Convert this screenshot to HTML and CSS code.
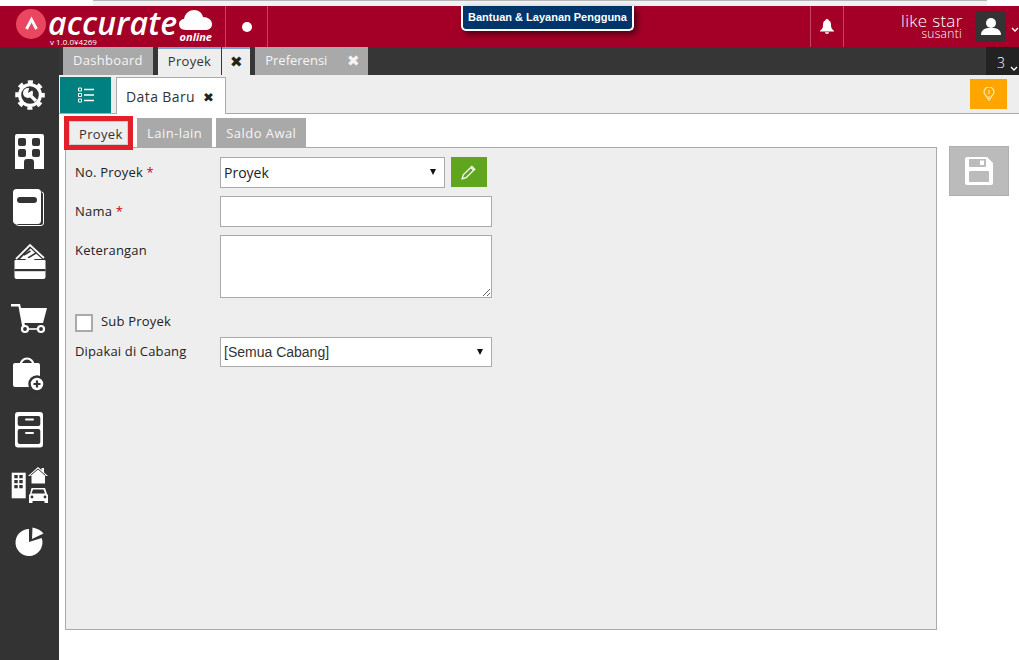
FILE: index.html
```html
<!DOCTYPE html>
<html lang="en">
  <head>
    <meta charset="UTF-8" />
    <title>Accurate Online - Proyek</title>
    <link rel="stylesheet" href="styles.css">
  </head>
  <body>
    <div class="top-strip"></div>
    <header class="header">
      <div class="logo">
        <svg class="logo-mark" viewBox="0 0 30 30" width="30" height="30">
          <circle cx="15" cy="15" r="15" fill="#e9475f" />
          <path d="M10.500 20 L15.500 10.500 L20.500 20" fill="none" stroke="#fff" stroke-width="2.800" />
        </svg>
        <span class="logo-word">accurate</span>
        <span class="logo-version">v 1.0.0¥4269</span>
        <div class="logo-cloud">
          <svg viewBox="0 0 33 22" width="33" height="22">
            <path d="M7 21 C2 21 0 18 0 15 C0 12 3 10 5 10 C6 4 11 1 15 1 C20 1 23 4 24 8 C29 8 33 11 33 15 C33 19 30 21 26 21 Z" fill="#fff" />
          </svg>
          <span>online</span>
        </div>
      </div>
      <div class="header-cell dot-cell"><span class="dot"></span></div>
      <div class="header-spacer"></div>
      <div class="header-cell bell-cell">
        <svg viewBox="0 0 14 15" width="14" height="15">
          <path d="M7 0 C8 0 8.500 .6 8.500 1.300 C10.500 2 11 4 11 6 C11 9 12 10.500 14 11.800 L14 12.500 L0 12.500 L0 11.800 C2 10.500 3 9 3 6 C3 4 3.500 2 5.500 1.300 C5.500 .6 6 0 7 0 Z M5 13.300 L9 13.300 C9 14.400 8 15 7 15 C6 15 5 14.400 5 13.300 Z" fill="#fff" />
        </svg>
      </div>
      <div class="user">
        <div class="user-name">like star</div>
        <div class="user-sub">susanti</div>
      </div>
      <div class="avatar">
        <svg viewBox="0 0 20 20" width="20" height="20">
          <circle cx="10" cy="6" r="5" fill="#fff" />
          <path d="M0 18 C0 13 4 11.500 7 11 L13 11 C16 11.500 20 13 20 18 Z" fill="#fff" />
        </svg>
      </div>
      <svg class="chevron" viewBox="0 0 8 5" width="8" height="5">
        <path d="M1 1 L4 4 L7 1" fill="none" stroke="#fff" stroke-width="1.300" />
      </svg>
      <div class="help-tip">Bantuan &amp; Layanan Pengguna</div>
    </header>

    <div class="main">
      <nav class="sidebar">
        <svg viewBox="0 0 40 40" width="40" height="40">
          <circle cx="20" cy="20" r="12" fill="#fff" />
          <circle cx="20" cy="20" r="12.800" fill="none" stroke="#fff" stroke-width="4" stroke-dasharray="5 5.050" stroke-dashoffset="2.500" />
          <circle cx="20" cy="20" r="8.800" fill="#333" />
          <path d="M19 19 L26 26" stroke="#fff" stroke-width="3.200" />
          <circle cx="18" cy="18" r="5" fill="#fff" />
          <path d="M18 18 L19.500 11.500 L24.500 14 Z" fill="#333" />
        </svg>
        <svg viewBox="0 0 40 40" width="40" height="40">
          <path d="M5 5 Q5 3 7 3 L32 3 Q34 3 34 5 L34 38 L24 38 L24 31 Q24 28 21 28 L17 28 Q14 28 14 31 L14 38 L5 38 Z" fill="#fff" />
          <rect x="8" y="7" width="8" height="8" rx="2" fill="#333" />
          <rect x="22" y="7" width="8" height="8" rx="2" fill="#333" />
          <rect x="8" y="18" width="8" height="8" rx="2" fill="#333" />
          <rect x="22" y="18" width="8" height="8" rx="2" fill="#333" />
        </svg>
        <svg viewBox="0 0 40 40" width="40" height="40">
          <path d="M31.500 5 Q33.500 5 33.500 7 L33.500 36 Q33.500 38.500 31 38.500 L9 38.500 Q6 38.500 5 36" fill="none" stroke="#fff" stroke-width="1" />
          <rect x="3" y="2" width="28" height="35" rx="3.500" fill="#fff" />
          <rect x="7" y="10" width="20" height="6" rx="3" fill="#333" />
        </svg>
        <svg viewBox="0 0 40 40" width="40" height="40">
          <path d="M6 17 L20 3 L34 16" fill="none" stroke="#fff" stroke-width="1.800" />
          <path d="M10 17 L20.500 6.500 L32 17 Z" fill="#fff" />
          <path d="M14 13 L20.500 9 M18 16 L26 11" stroke="#333" stroke-width="1.500" />
          <path d="M4.500 19 Q4.500 18 5.500 18 L15 18 Q20 13.500 25 18 L34.500 18 Q35.500 18 35.500 19 L35.500 35 Q35.500 37 33.500 37 L6.500 37 Q4.500 37 4.500 35 Z" fill="#fff" />
          <rect x="4.500" y="27" width="31" height="2.200" fill="#333" />
        </svg>
        <svg viewBox="0 0 40 40" width="40" height="40">
          <path d="M1 6 L10 6 L11 10 L37 10 L33 25 L14.500 25 L15.500 30 L12.500 30 L8.500 8.500 L1 8.500 Z" fill="#fff" />
          <path d="M15 31 L31 31" stroke="#fff" stroke-width="1.600" />
          <circle cx="15" cy="31" r="3" fill="#333" stroke="#fff" stroke-width="2.200" />
          <circle cx="31" cy="31" r="3" fill="#333" stroke="#fff" stroke-width="2.200" />
        </svg>
        <svg viewBox="0 0 40 40" width="40" height="40">
          <path d="M10.500 11 A6.500 6.500 0 0 1 23.500 11" fill="none" stroke="#fff" stroke-width="2.200" />
          <path d="M3 11 Q3 9 5 9 L28 9 Q30 9 30 11 L30 33 L5 33 Q3 33 3 31 Z" fill="#fff" />
          <circle cx="27" cy="30" r="7.500" fill="#fff" stroke="#333" stroke-width="2.500" />
          <path d="M23.500 30 L30.500 30 M27 26.500 L27 33.500" stroke="#333" stroke-width="2.200" />
        </svg>
        <svg viewBox="0 0 40 40" width="40" height="40">
          <rect x="5" y="2" width="28" height="35.500" rx="3" fill="#fff" />
          <rect x="7.700" y="6" width="22.600" height="10" rx="2" fill="#333" />
          <rect x="7.700" y="19" width="22.600" height="15" rx="2" fill="#333" />
          <rect x="15" y="8.500" width="9" height="2" rx="1" fill="#fff" />
          <rect x="15" y="22" width="9" height="2" rx="1" fill="#fff" />
        </svg>
        <svg viewBox="0 0 40 40" width="40" height="40">
          <rect x="1.700" y="6.700" width="14" height="25.600" fill="#fff" />
          <path d="M4.300 9 h3.400 v3.300 h-3.400 Z M9.300 9 h3.400 v3.300 h-3.400 Z M4.300 14 h3.400 v3.300 h-3.400 Z M9.300 14 h3.400 v3.300 h-3.400 Z M4.300 19 h3.400 v3.300 h-3.400 Z M9.300 19 h3.400 v3.300 h-3.400 Z" fill="#333" />
          <path d="M18 10 L28 1 L31.500 4 L31.500 2 L34 2 L34 6.500 L38 10 L35 10 L35 17.500 L21.500 17.500 L21.500 10 Z" fill="#fff" />
          <path d="M20.500 9.500 L28 3 L35.500 9.500" fill="none" stroke="#333" stroke-width="1" />
          <path d="M21.500 22 L35 22 L37 28 L38 29 L38 37 L34.500 37 L34.500 35 L22.500 35 L22.500 37 L19 37 L19 29 L20 28 Z" fill="#fff" />
          <path d="M23 23.500 L33.500 23.500 L35 27.500 L21.500 27.500 Z" fill="#333" />
          <circle cx="22" cy="31" r="1.400" fill="#333" />
          <circle cx="35" cy="31" r="1.400" fill="#333" />
        </svg>
        <svg viewBox="0 0 40 40" width="40" height="40">
          <path d="M19 8 L19 21 L31.700 17 A13.500 13.500 0 1 1 19 8 Z" fill="#fff" />
          <path d="M22 18 L22.500 6.500 Q30 8 33.500 12.500 Z" fill="#fff" />
        </svg>
      </nav>

      <div class="content">
        <div class="tabbar">
          <div class="tab">Dashboard</div>
          <div class="tab-group tab-group-active">
            <div class="tab tab-active">Proyek</div>
            <div class="tab tab-active tab-close">✖</div>
          </div>
          <div class="tab-group">
            <div class="tab tab-pref">Preferensi</div>
            <div class="tab tab-close">✖</div>
          </div>
          <div class="tab-count">3
            <svg viewBox="0 0 8 5" width="8" height="5">
              <path d="M1 1 L4 4 L7 1" fill="none" stroke="#fff" stroke-width="1.300" />
            </svg>
          </div>
        </div>

        <div class="toolbar">
          <div class="list-btn">
            <svg viewBox="0 0 18 18" width="18" height="18">
              <path d="M1.500 2 h3 v3 h-3 Z M1.500 7.500 h3 v3 h-3 Z M1.500 13 h3 v3 h-3 Z" fill="none" stroke="#fff" />
              <path d="M7 3.500 H17 M7 9 H17 M7 14.500 H17" stroke="#fff" stroke-width="1.500" />
            </svg>
          </div>
          <div class="doc-tab">Data Baru <span class="doc-close">✖</span></div>
          <div class="hint-btn">
            <svg viewBox="0 0 12 14" width="12" height="14">
              <path d="M3.500 10 C3.500 8 1 7.500 1 5 A5 5 0 0 1 11 5 C11 7.500 8.500 8 8.500 10 Z" fill="none" stroke="#ffe9a8" stroke-width="1.200" />
              <path d="M6 3 L6 7" stroke="#ffe9a8" stroke-width="1.200" />
              <path d="M4 11.500 H8 M4.500 13 H7.500" stroke="#ffe9a8" />
            </svg>
          </div>
        </div>

        <div class="body-row">
          <div class="form-col">
            <div class="subtabs">
              <div class="subtab subtab-active">Proyek</div>
              <div class="subtab">Lain-lain</div>
              <div class="subtab">Saldo Awal</div>
            </div>
            <form class="panel">
              <div class="row">
                <label class="label">No. Proyek <span class="req">*</span></label>
                <div class="select-wrap select-short">
                  <select class="field"><option>Proyek</option></select>
                </div>
                <button type="button" class="edit-btn">
                  <svg viewBox="0 0 14 14" width="16" height="16">
                    <path d="M1 13 L2 9.500 L9.500 2 L12 4.500 L4.500 12 Z M8.500 3 L11 5.500" fill="none" stroke="#fff" stroke-width="1.100" />
                  </svg>
                </button>
              </div>
              <div class="row">
                <label class="label">Nama <span class="req">*</span></label>
                <input class="field field-wide" type="text" />
              </div>
              <div class="row row-top">
                <label class="label">Keterangan</label>
                <textarea class="field field-wide field-area"></textarea>
              </div>
              <div class="check-row">
                <span class="check"></span>
                <label>Sub Proyek</label>
              </div>
              <div class="row">
                <label class="label label-branch">Dipakai di Cabang</label>
                <div class="select-wrap">
                  <select class="field field-wide field-arial"><option>[Semua Cabang]</option></select>
                </div>
              </div>
            </form>
          </div>
          <div class="save-btn">
            <svg viewBox="0 0 30 30" width="30" height="30">
              <path fill-rule="evenodd" d="M3 1 L23 1 L29 7 L29 27 Q29 29 27 29 L3 29 Q1 29 1 27 L1 3 Q1 1 3 1 Z M5 3 L5 10 Q5 11 6 11 L21 11 Q22 11 22 10 L22 3 Z M16 4.500 L20 4.500 L20 9 L16 9 Z M6 15 Q5 15 5 16 L5 26 L25 26 L25 16 Q25 15 24 15 Z" fill="#fff" />
            </svg>
          </div>
        </div>
      </div>
    </div>
  </body>
</html>
```

FILE: styles.css
```css
* {
  box-sizing: border-box;
}
html,
body {
  margin: 0;
  height: 660px;
  overflow: hidden;
}
body {
  font-family: "Open Sans", "Noto Sans", sans-serif;
  font-size: 13px;
  color: #222;
  background: white;
}
.top-strip {
  height: 6px;
  background: #f2f2f2;
  border-top: 1px solid #b5b5b5;
  margin-left: 93px;
  margin-right: 32px;
}

/* header */
.header {
  position: relative;
  height: 41px;
  display: flex;
  align-items: stretch;
  background: #a40027;
  color: white;
}
.logo {
  position: relative;
  width: 225px;
  flex: none;
}
.logo-mark {
  position: absolute;
  left: 16px;
  top: 3px;
}
.logo-word {
  position: absolute;
  left: 48px;
  top: 2px;
  font-family: "Open Sans", sans-serif;
  font-size: 32px;
  font-style: italic;
  font-weight: 600;
  letter-spacing: 0.2px;
  line-height: 30px;
  white-space: nowrap;
}
.logo-version {
  position: absolute;
  left: 50px;
  top: 32px;
  font-size: 8px;
  line-height: 8px;
  white-space: nowrap;
}
.logo-cloud {
  position: absolute;
  left: 179px;
  top: 3px;
  width: 33px;
  font-size: 11px;
  font-weight: 700;
  font-style: italic;
  line-height: 9px;
  text-align: right;
}
.logo-cloud svg {
  display: block;
  margin-bottom: 1px;
}
.header-cell {
  display: flex;
  align-items: center;
  justify-content: center;
  border-left: 1px solid #c2445f;
  flex: none;
}
.dot-cell {
  width: 43px;
  border-right: 1px solid #c2445f;
}
.dot {
  width: 10px;
  height: 10px;
  border-radius: 50%;
  background: white;
}
.header-spacer {
  flex: 1;
}
.bell-cell {
  width: 34px;
  border-right: 1px solid #c2445f;
  margin-right: 58px;
}
.user {
  width: 61px;
  margin-right: 13px;
  margin-left: -1px;
  text-align: right;
  white-space: nowrap;
  font-weight: 300;
}
.user-name {
  font-size: 17px;
  line-height: 14px;
  margin-top: 8px;
  letter-spacing: 0.3px;
}
.user-sub {
  font-size: 12px;
  line-height: 12px;
  letter-spacing: 0.3px;
}
.avatar {
  width: 31px;
  height: 31px;
  margin-top: 5px;
  margin-right: 5px;
  background: #333;
  border-radius: 2px;
  display: flex;
  align-items: center;
  justify-content: center;
  flex: none;
}
.chevron {
  margin-top: 21px;
  flex: none;
}
.help-tip {
  position: absolute;
  left: 461px;
  top: 0;
  width: 173px;
  height: 25px;
  background: #00356b;
  color: white;
  border: 2px solid white;
  border-top: none;
  border-radius: 0 0 5px 5px;
  box-shadow: 3px 3px 6px rgba(0, 0, 0, 0.55);
  font-family: "Liberation Sans", Arial, sans-serif;
  font-size: 11px;
  font-weight: 700;
  line-height: 22px;
  text-align: center;
  white-space: nowrap;
}

/* layout */
.main {
  height: 613px;
  display: flex;
}
.sidebar {
  width: 59px;
  flex: none;
  background: #333;
  padding-top: 28px;
  display: flex;
  flex-direction: column;
  align-items: center;
  gap: 15.800px;
}
.content {
  flex: 1;
  min-width: 0;
}

/* top tabs */
.tabbar {
  height: 28px;
  background: #363636;
  display: flex;
  padding-left: 4px;
  gap: 5px;
}
.tab {
  height: 28px;
  padding: 0 10px;
  background: #a9a9a9;
  color: #f5f5f5;
  line-height: 27px;
  letter-spacing: 0.3px;
}
.tab-group {
  display: flex;
}
.tab-group-active {
  gap: 1px;
}
.tab-active {
  background: #eeeeee;
  color: #333;
  border-top: 2px solid #7da2d0;
  line-height: 25px;
}
.tab-pref {
  width: 83px;
  padding-right: 0;
  white-space: nowrap;
  letter-spacing: 0;
}
.tab-close {
  width: 30px;
  padding: 0;
  text-align: center;
  font-size: 15px;
  letter-spacing: 0;
}
.tab-group-active .tab-close {
  width: 28px;
  color: #222;
}
.tab-count {
  margin-left: auto;
  width: 33px;
  background: #222;
  color: white;
  font-size: 14px;
  font-weight: 300;
  line-height: 31px;
  padding-left: 11px;
  position: relative;
  white-space: nowrap;
}
.tab-count svg {
  position: absolute;
  right: 1px;
  bottom: 4px;
}

/* toolbar */
.toolbar {
  height: 39px;
  background: #eeeeee;
  border-bottom: 1px solid #aaa;
  display: flex;
  align-items: flex-start;
  padding-top: 2px;
  padding-left: 1px;
}
.list-btn {
  width: 51px;
  height: 36px;
  background: #008080;
  display: flex;
  align-items: center;
  justify-content: center;
  margin-right: 5px;
}
.doc-tab {
  width: 110px;
  height: 37px;
  background: white;
  border: 1px solid #aaa;
  border-bottom: none;
  padding-left: 9px;
  font-size: 14px;
  line-height: 37px;
  letter-spacing: 0.4px;
  color: #333;
}
.doc-close {
  margin-left: 4px;
  font-size: 13px;
  color: #222;
}
.hint-btn {
  margin-left: auto;
  margin-right: 12px;
  margin-top: 2px;
  width: 37px;
  height: 30px;
  background: #ffa500;
  display: flex;
  align-items: center;
  justify-content: center;
}

/* body */
.body-row {
  display: flex;
  align-items: flex-start;
  padding-left: 6px;
}
.form-col {
  width: 872px;
}
.subtabs {
  height: 33px;
  padding-top: 4px;
  display: flex;
  gap: 4px;
  padding-left: 3px;
}
.subtab {
  height: 29px;
  padding: 0 10px;
  background: #a9a9a9;
  color: #f5f5f5;
  line-height: 30px;
  letter-spacing: 0.45px;
  white-space: nowrap;
}
.subtab-active {
  width: 59px;
  height: 24px;
  margin: 3px 5px 0 1px;
  background: #eeeeee;
  color: #333;
  letter-spacing: 0.35px;
  line-height: 26px;
  outline: 5px solid #e1202c;
  box-shadow: inset 0 0 0 1px #d0d0d0;
}
.panel {
  height: 483px;
  background: #eeeeee;
  border: 1px solid #aaa;
  padding: 9px 9px 0;
  display: flex;
  flex-direction: column;
}
.row {
  display: flex;
  align-items: flex-start;
  margin-bottom: 8px;
}
.label {
  width: 145px;
  flex: none;
  padding-top: 6px;
  color: #222;
  line-height: 18px;
  letter-spacing: 0.2px;
  font-size: 13px;
}
.label-branch {
  padding-top: 5px;
  letter-spacing: 0.15px;
}
.req {
  color: #c00;
}
.field {
  width: 100%;
  height: 31px;
  margin: 0;
  background: white;
  border: 1px solid #aaa;
  border-radius: 0;
  padding: 0 3px;
  font-family: "Open Sans", sans-serif;
  font-size: 14px;
  color: #222;
  appearance: none;
  outline: none;
}
.field-wide {
  width: 272px;
}
.field-area {
  height: 63px;
  display: block;
}
.field-arial {
  height: 30px;
  font-family: "Liberation Sans", Arial, sans-serif;
  color: #333;
}
.select-wrap {
  position: relative;
  width: 272px;
}
.select-short {
  width: 225px;
}
.select-wrap::after {
  content: "";
  position: absolute;
  right: 9px;
  top: 12px;
  border-left: 3.500px solid transparent;
  border-right: 3.500px solid transparent;
  border-top: 6px solid #111;
}
.edit-btn {
  width: 36px;
  height: 30px;
  margin-left: 6px;
  padding: 0;
  border: none;
  background: #5fa61e;
  display: flex;
  align-items: center;
  justify-content: center;
}
.check-row {
  display: flex;
  align-items: center;
  gap: 8px;
  height: 18px;
  margin-top: 8px;
  margin-bottom: 5px;
  letter-spacing: 0.2px;
}
.check {
  width: 18px;
  height: 18px;
  background: white;
  border: 2px solid #aaa;
}
.check-row label {
  margin-top: -5px;
}
.save-btn {
  width: 60px;
  height: 50px;
  margin-left: 12px;
  margin-top: 32px;
  background: #bbbbbb;
  border: 1px solid #b0b0b0;
  display: flex;
  align-items: center;
  justify-content: center;
}
```
